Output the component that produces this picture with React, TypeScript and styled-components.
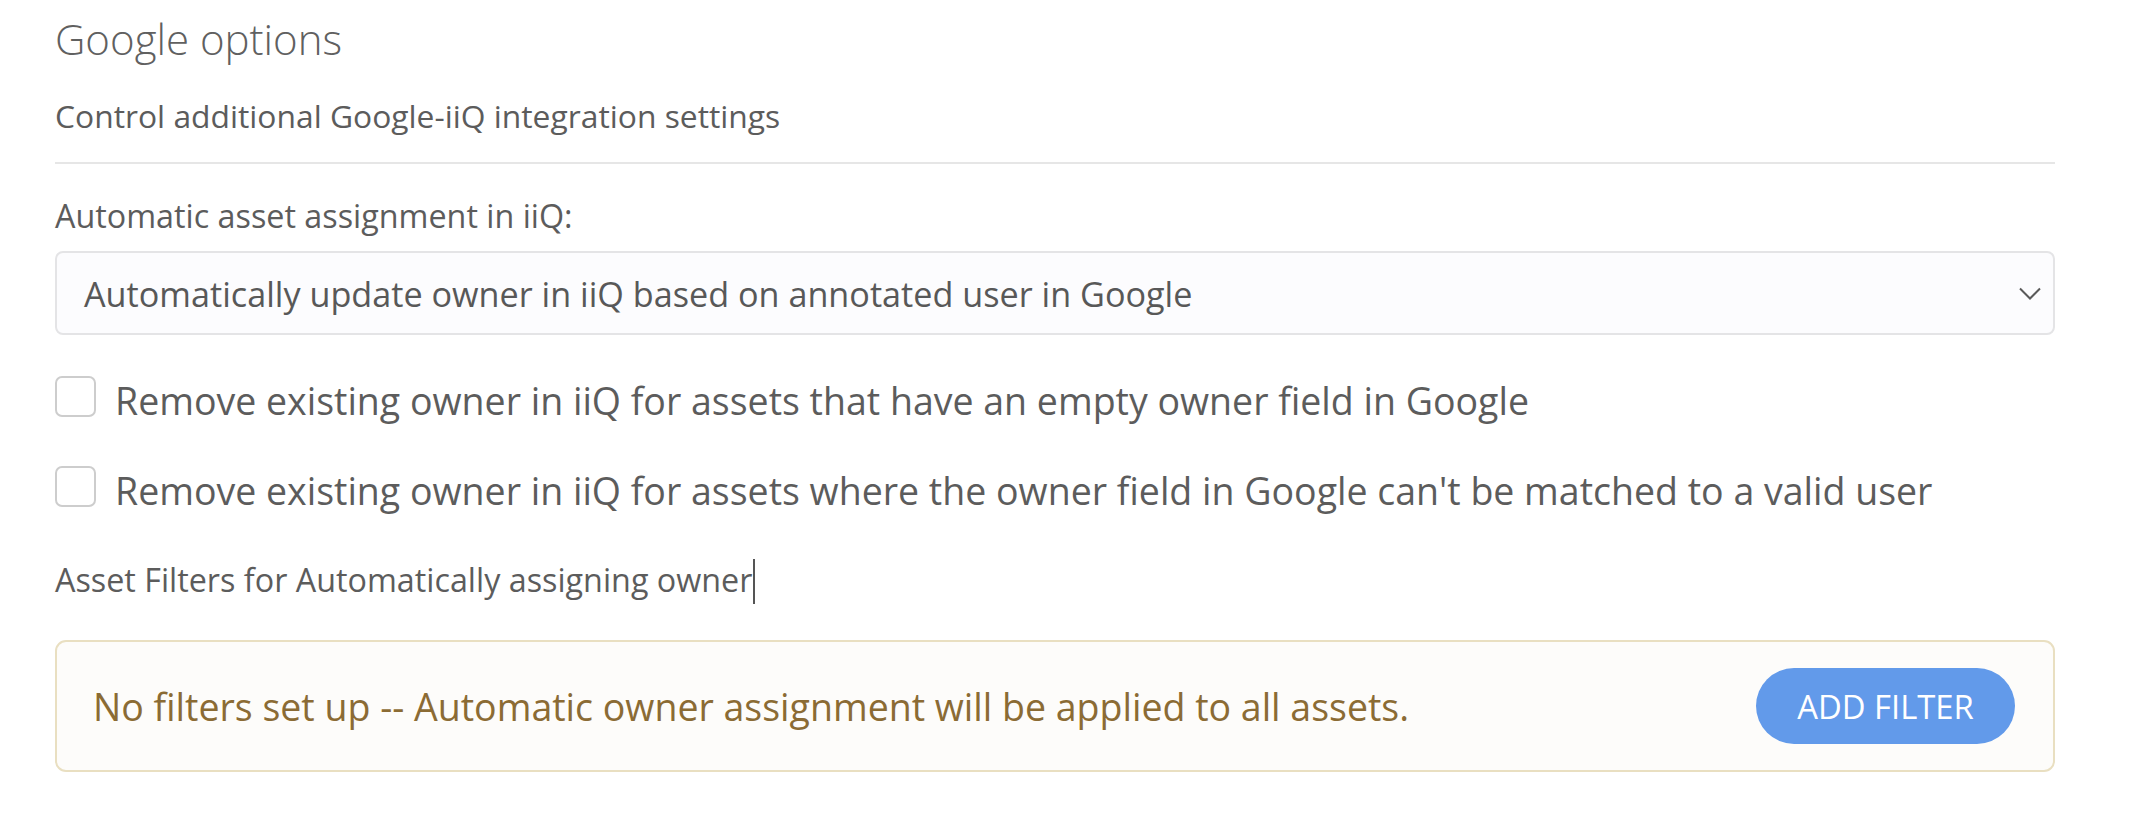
import React from 'react'
import styled, { createGlobalStyle } from 'styled-components'

const GlobalStyle = createGlobalStyle`
  html, body {
    margin: 0;
    padding: 0;
    background: #ffffff;
  }
  body {
    font-family: 'Open Sans', 'Noto Sans', sans-serif;
    color: #5c5c5c;
  }
`

const Page = styled.div`
  width: 2000px;
  padding: 10px 0 0 55px;
`

const Title = styled.h2`
  margin: 0;
  font-size: 42px;
  font-weight: 300;
  line-height: 58px;
  color: #606060;
`

const Subtitle = styled.p`
  margin: 26px 0 0;
  font-size: 31.8px;
  line-height: 44px;
  color: #5c5c5c;
`

const Divider = styled.hr`
  margin: 24px 0 0;
  border: 0;
  border-top: 2px solid #e6e6e6;
`

const FieldLabel = styled.label<{ $top: number }>`
  display: block;
  margin-top: ${(p) => p.$top}px;
  font-size: 32.3px;
  line-height: 44px;
  color: #5c5c5c;
`

const SelectBox = styled.div`
  margin-top: 14px;
  height: 84px;
  box-sizing: border-box;
  display: flex;
  align-items: center;
  padding: 0 30px 0 27px;
  background: #fcfcfe;
  border: 2px solid #e4e4e6;
  border-radius: 8px;
  font-size: 34.2px;
  color: #585858;
`

const SelectText = styled.span`
  flex: 1;
`

const Chevron = styled.svg`
  width: 22px;
  height: 13px;
  margin-right: -18px;
`

const CheckRow = styled.label<{ $top: number }>`
  display: flex;
  align-items: center;
  gap: 19px;
  margin-top: ${(p) => p.$top}px;
  font-size: 37.5px;
  line-height: 52px;
  color: #5c5c5c;
`

const Box = styled.span`
  flex: none;
  width: 41px;
  height: 41px;
  box-sizing: border-box;
  border: 2px solid #cdcdcd;
  border-radius: 7px;
  background: #fff;
  margin-top: -10px;
`

const Caret = styled.span`
  display: inline-block;
  width: 2px;
  height: 45px;
  margin-left: 1px;
  vertical-align: -12px;
  background: #555;
`

const Alert = styled.div`
  margin-top: 36px;
  height: 132px;
  box-sizing: border-box;
  display: flex;
  align-items: center;
  justify-content: space-between;
  padding: 0 38px 0 36px;
  background: #fdfcfa;
  border: 2px solid #e9dfc1;
  border-radius: 11px;
  font-size: 37.5px;
  color: #8b6b34;
`

const AddButton = styled.button`
  height: 76px;
  width: 259px;
  border: 0;
  border-radius: 38px;
  background: #629aea;
  color: #fff;
  font-family: 'Open Sans', sans-serif;
  font-size: 32.8px;
  text-transform: uppercase;
  cursor: pointer;
`

export default function App() {
  return (
    <Page>
      <GlobalStyle />
      <Title>Google options</Title>
      <Subtitle>Control additional Google-iiQ integration settings</Subtitle>
      <Divider />
      <FieldLabel $top={29}>Automatic asset assignment in iiQ:</FieldLabel>
      <SelectBox>
        <SelectText>Automatically update owner in iiQ based on annotated user in Google</SelectText>
        <Chevron viewBox="0 0 22 13" fill="none">
          <path d="M1 1.5 L11 11.5 L21 1.5" stroke="#5a5a5a" strokeWidth="2" />
        </Chevron>
      </SelectBox>
      <CheckRow $top={40}>
        <Box />
        Remove existing owner in iiQ for assets that have an empty owner field in Google
      </CheckRow>
      <CheckRow $top={38}>
        <Box />
        Remove existing owner in iiQ for assets where the owner field in Google can't be matched to a valid user
      </CheckRow>
      <FieldLabel $top={40}>
        Asset Filters for Automatically assigning owner
        <Caret />
      </FieldLabel>
      <Alert>
        No filters set up -- Automatic owner assignment will be applied to all assets.
        <AddButton>Add filter</AddButton>
      </Alert>
    </Page>
  )
}
